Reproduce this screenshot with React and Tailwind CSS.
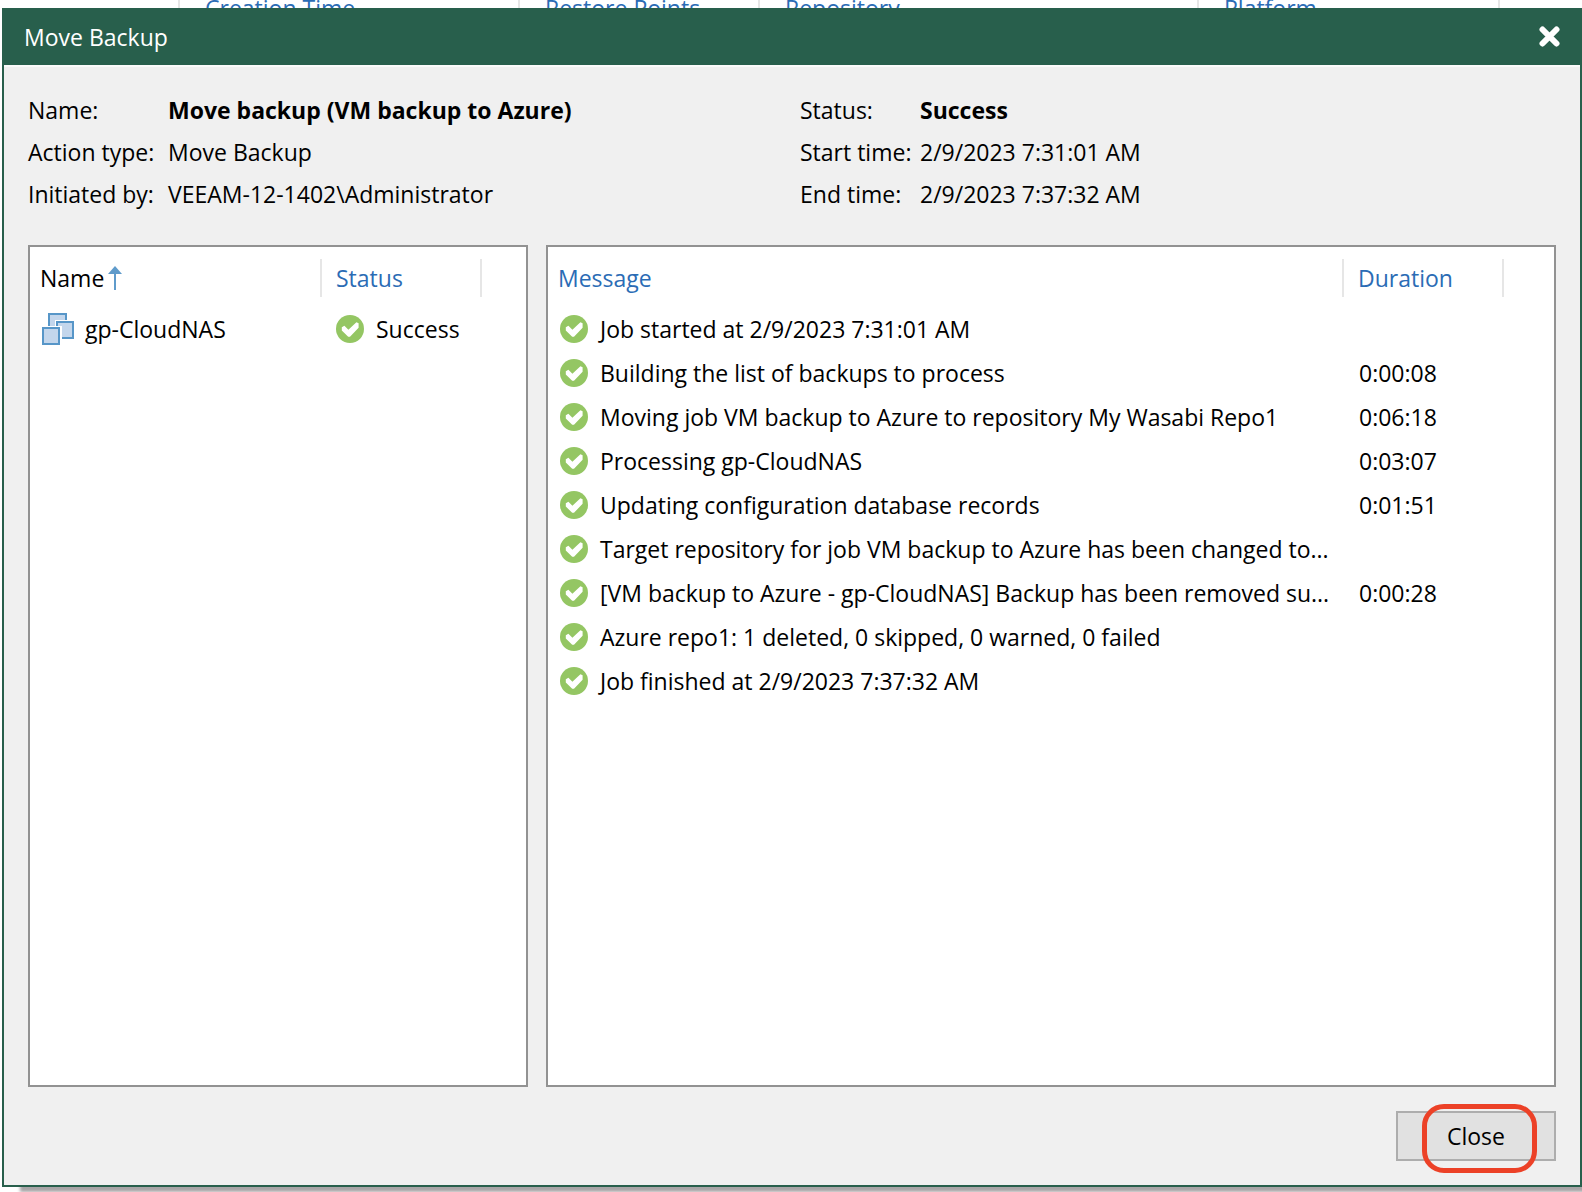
import React from "react";

const BACKGROUND_COLUMNS = [
  { title: "", width: "w-[180px]" },
  { title: "Creation Time", width: "w-[340px]" },
  { title: "Restore Points", width: "w-[240px]" },
  { title: "Repository", width: "w-[439px]" },
  { title: "Platform", width: "w-[301px]" },
];

const JOB_INFO = [
  { label: "Name:", value: "Move backup (VM backup to Azure)", bold: true },
  { label: "Action type:", value: "Move Backup" },
  { label: "Initiated by:", value: "VEEAM-12-1402\\Administrator" },
];

const RUN_INFO = [
  { label: "Status:", value: "Success", bold: true },
  { label: "Start time:", value: "2/9/2023 7:31:01 AM" },
  { label: "End time:", value: "2/9/2023 7:37:32 AM" },
];

const OBJECTS = [{ name: "gp-CloudNAS", status: "Success" }];

const MESSAGES = [
  { text: "Job started at 2/9/2023 7:31:01 AM", duration: "" },
  { text: "Building the list of backups to process", duration: "0:00:08" },
  { text: "Moving job VM backup to Azure to repository My Wasabi Repo1", duration: "0:06:18" },
  { text: "Processing gp-CloudNAS", duration: "0:03:07" },
  { text: "Updating configuration database records", duration: "0:01:51" },
  { text: "Target repository for job VM backup to Azure has been changed to...", duration: "" },
  { text: "[VM backup to Azure - gp-CloudNAS] Backup has been removed su...", duration: "0:00:28" },
  { text: "Azure repo1: 1 deleted, 0 skipped, 0 warned, 0 failed", duration: "" },
  { text: "Job finished at 2/9/2023 7:37:32 AM", duration: "" },
];

function SuccessIcon() {
  return (
    <svg viewBox="0 0 28 28" className="size-7 shrink-0" aria-hidden="true">
      <circle cx="14" cy="14" r="14" fill="#94c663" />
      <path d="M5.8 12.2 8.4 10.8 12.4 14.8 20.4 7.2 22.6 8.2V12.8L14 21.8H12.2L5.8 15.6Z" fill="#fff" />
    </svg>
  );
}

function VmIcon() {
  return (
    <svg viewBox="0 0 32 32" className="size-8 shrink-0" fill="#c3d6ec" stroke="#5796c8" strokeWidth="2" aria-hidden="true">
      <rect x="7" y="1" width="17" height="16" />
      <rect x="13" y="7" width="19" height="20" fill="#fff" stroke="none" />
      <rect x="15" y="9" width="16" height="16" />
      <rect x="0" y="13" width="20" height="19" fill="#fff" stroke="none" />
      <rect x="1" y="15" width="16" height="16" />
    </svg>
  );
}

function SortArrow() {
  return (
    <svg viewBox="0 0 14 24" className="w-[14px] h-6 shrink-0" fill="#5f9bcb" aria-hidden="true">
      <path d="M7 0 14 8H8V24H6V8H0Z" />
    </svg>
  );
}

function InfoList({ items, labelWidth }) {
  return (
    <dl className="flex flex-col">
      {items.map((item) => (
        <div key={item.label} className="flex h-[42px] items-center">
          <dt className={`${labelWidth} shrink-0`}>{item.label}</dt>
          <dd className={item.bold ? "font-bold" : ""}>{item.value}</dd>
        </div>
      ))}
    </dl>
  );
}

function HeaderCell({ children, className = "", pad = "pl-[14px]" }) {
  return (
    <th scope="col" className={`pt-3 pb-[10px] text-left align-top font-normal ${className}`}>
      <div className={`flex h-[38px] items-center border-r-2 border-[#e6e6e6] ${pad}`}>{children}</div>
    </th>
  );
}

function ObjectsTable() {
  return (
    <table className="w-full table-fixed border-collapse">
      <thead>
        <tr className="text-[#2b6cb5]">
          <HeaderCell className="w-[292px] text-black" pad="pl-[10px] gap-1">
            Name
            <SortArrow />
          </HeaderCell>
          <HeaderCell className="w-[160px]">Status</HeaderCell>
          <td />
        </tr>
      </thead>
      <tbody>
        {OBJECTS.map((o) => (
          <tr key={o.name} className="h-11">
            <td className="p-0">
              <div className="flex items-center gap-[11px] pl-3">
                <VmIcon />
                {o.name}
              </div>
            </td>
            <td className="p-0">
              <div className="flex items-center gap-3 pl-[14px]">
                <SuccessIcon />
                {o.status}
              </div>
            </td>
            <td />
          </tr>
        ))}
      </tbody>
    </table>
  );
}

function MessagesTable() {
  return (
    <table className="w-full table-fixed border-collapse">
      <thead>
        <tr className="text-[#2b6cb5]">
          <HeaderCell pad="pl-[10px]">Message</HeaderCell>
          <HeaderCell className="w-[160px]">Duration</HeaderCell>
          <td className="w-[50px]" />
        </tr>
      </thead>
      <tbody>
        {MESSAGES.map((m) => (
          <tr key={m.text} className="h-11">
            <td className="p-0">
              <div className="flex items-center gap-3 pl-3">
                <SuccessIcon />
                <span className="whitespace-nowrap">{m.text}</span>
              </div>
            </td>
            <td className="p-0 pl-[15px]">{m.duration}</td>
            <td />
          </tr>
        ))}
      </tbody>
    </table>
  );
}

export default function App() {
  return (
    <div className="flex min-h-screen flex-col bg-white font-['Open_Sans',sans-serif] text-[23px] leading-8 text-black">
      {/* header row of the list behind the dialog */}
      <div className="flex h-2 overflow-hidden text-[#2b6cb5]">
        {BACKGROUND_COLUMNS.map((c) => (
          <div key={c.title} className={`${c.width} h-8 shrink-0 -mt-2 border-r-2 border-[#e6e6e6] pl-[25px]`}>
            {c.title}
          </div>
        ))}
      </div>

      <section
        aria-label="Move Backup"
        className="ml-[2px] mb-[5px] flex flex-1 flex-col border-2 border-t-0 border-[#285f4c] bg-[#f0f0f0] shadow-[18px_5px_3px_0px_#a8a4a6]"
      >
        <header className="flex h-[57px] shrink-0 items-center justify-between bg-[#285f4c] px-5 text-white">
          <h1>Move Backup</h1>
          <button type="button" aria-label="Close window">
            <svg viewBox="0 0 21 21" className="size-[21px]" stroke="#fff" strokeWidth="6" strokeLinecap="round" aria-hidden="true">
              <path d="M3.5 3.5 17.5 17.5M17.5 3.5 3.5 17.5" />
            </svg>
          </button>
        </header>

        <div className="flex flex-1 flex-col border-t-2 border-[#fafafa] px-6 pt-[22px] pb-6">
          <div className="grid grid-cols-[772fr_756fr]">
            <InfoList items={JOB_INFO} labelWidth="w-[140px]" />
            <InfoList items={RUN_INFO} labelWidth="w-[120px]" />
          </div>

          <div className="mt-[30px] flex flex-1 gap-[18px]">
            <div className="w-[500px] shrink-0 border-2 border-[#929292] bg-white">
              <ObjectsTable />
            </div>
            <div className="min-w-0 flex-1 border-2 border-[#929292] bg-white">
              <MessagesTable />
            </div>
          </div>

          <div className="mt-6 flex justify-end">
            <button type="button" className="relative h-[50px] w-40 border-2 border-[#adadad] bg-[#e1e1e1]">
              Close
              <span className="absolute -top-[9px] left-6 h-[69px] w-[115px] rounded-[22px] border-[5px] border-[#ec4127]" />
            </button>
          </div>
        </div>
      </section>
    </div>
  );
}
